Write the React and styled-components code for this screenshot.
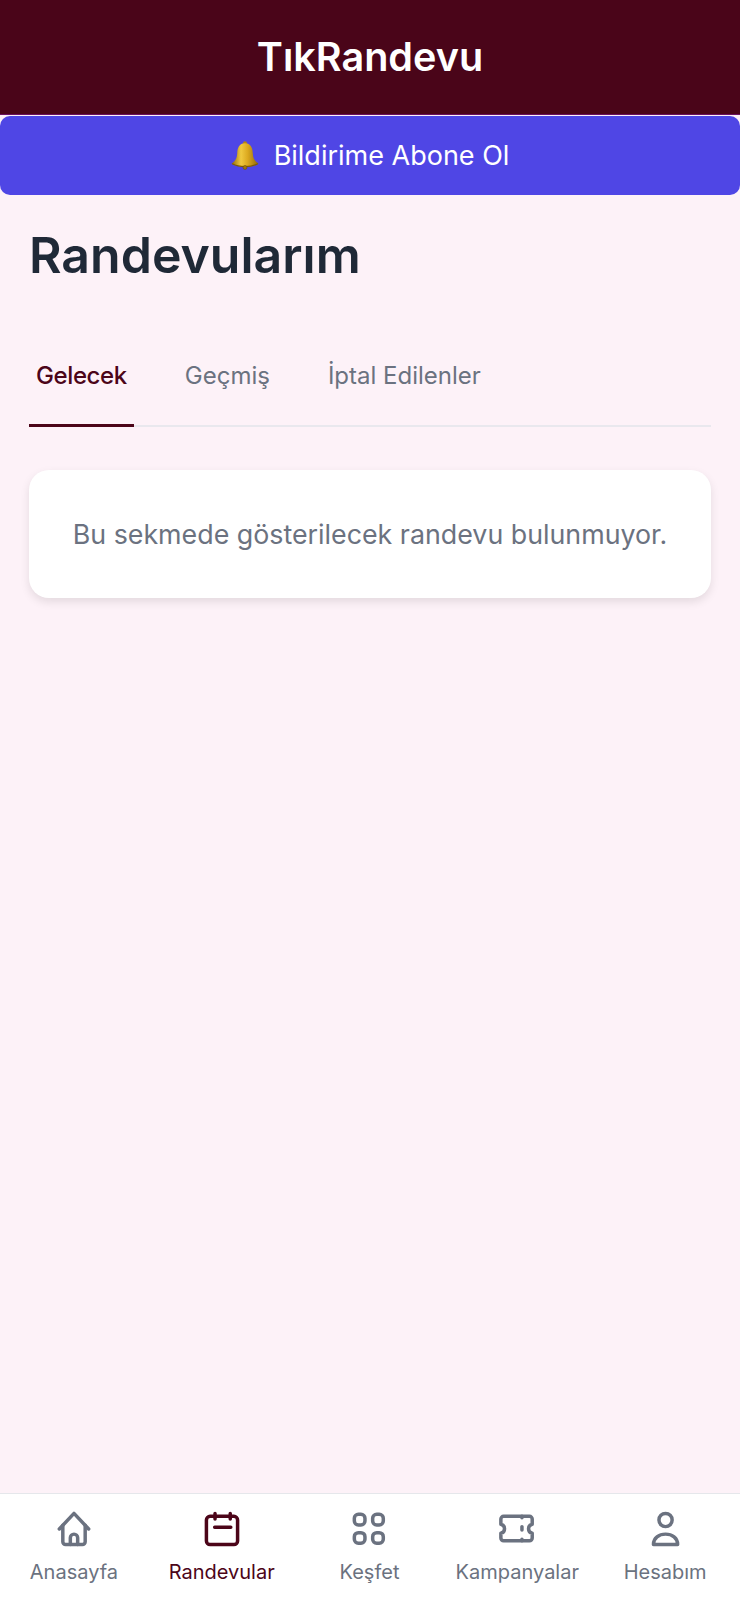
import styled, { createGlobalStyle } from "styled-components";

const GlobalStyle = createGlobalStyle`
  body {
    margin: 0;
    font-family: "Inter", "Noto Sans", sans-serif;
    background: #fdf2f8;
  }
`;

const tabs = ["Gelecek", "Geçmiş", "İptal Edilenler"];

const navItems = [
  {
    label: "Anasayfa",
    icon: (
      <>
        <path d="M4 12 12 3.500 20 12" />
        <path d="M5.900 10v9a1.500 1.500 0 0 0 1.500 1.500h9.200a1.500 1.500 0 0 0 1.500-1.500v-9" />
        <path d="M10 20.500V16.800a2 2 0 0 1 4 0v3.700" />
      </>
    ),
  },
  {
    label: "Randevular",
    active: true,
    icon: (
      <>
        <rect x="3.500" y="5.100" width="17" height="15.400" rx="2" />
        <path d="M8.200 3.500v3M16.500 3.500v3M8 11h8.800" />
      </>
    ),
  },
  {
    label: "Keşfet",
    icon: (
      <>
        <rect x="4" y="4" width="5.800" height="5.800" rx="2.200" />
        <rect x="14" y="4" width="5.800" height="5.800" rx="2.200" />
        <rect x="4" y="14" width="5.800" height="5.800" rx="2.200" />
        <rect x="14" y="14" width="5.800" height="5.800" rx="2.200" />
      </>
    ),
  },
  {
    label: "Kampanyalar",
    icon: (
      <>
        <path d="M4.700 5.100h14.100a1.500 1.500 0 0 1 1.500 1.500v2.800a2.500 2.500 0 0 0 0 4.900v2.600a1.500 1.500 0 0 1-1.500 1.500H4.700a1.500 1.500 0 0 1-1.500-1.500v-2.600a2.500 2.500 0 0 0 0-4.900V6.600a1.500 1.500 0 0 1 1.500-1.500Z" />
        <path d="M14.700 5.100v.8M14.700 10.700v1.800M14.700 17.600v.8" />
      </>
    ),
  },
  {
    label: "Hesabım",
    icon: (
      <>
        <circle cx="12.300" cy="7.100" r="3.600" />
        <path d="M5.700 20.400c0-3.500 3-5.600 6.600-5.600s6.600 2.100 6.600 5.600Z" />
      </>
    ),
  },
];

export default function App() {
  return (
    <Page>
      <GlobalStyle />
      <Header>TıkRandevu</Header>
      <SubscribeButton type="button">
        <BellIcon />
        Bildirime Abone Ol
      </SubscribeButton>
      <Main>
        <Title>Randevularım</Title>
        <TabBar>
          {tabs.map((tab, index) => (
            <Tab key={tab} $active={index === 0}>
              {tab}
            </Tab>
          ))}
        </TabBar>
        <EmptyCard>Bu sekmede gösterilecek randevu bulunmuyor.</EmptyCard>
      </Main>
      <BottomNav>
        {navItems.map(({ label, icon, active }) => (
          <NavItem key={label} $active={active}>
            <NavIcon viewBox="0 0 24 24">{icon}</NavIcon>
            {label}
          </NavItem>
        ))}
      </BottomNav>
    </Page>
  );
}

function BellIcon() {
  return (
    <StyledBell viewBox="2 1 24 25">
      <defs>
        <linearGradient id="bellGold" x1="0" x2="1" y1="0" y2="0">
          <stop offset="0" stopColor="#8f6708" />
          <stop offset="0.35" stopColor="#f0c93f" />
          <stop offset="0.6" stopColor="#dca91f" />
          <stop offset="1" stopColor="#8f6708" />
        </linearGradient>
      </defs>
      <circle cx="14" cy="3" r="1.800" fill="#b5860f" />
      <path
        d="M14 3c-5 0-6.500 4-6.700 8.500-.2 4.500-1.800 7-5 9 3 2 7.700 3 11.700 3s8.700-1 11.700-3c-3.200-2-4.800-4.500-5-9C20.500 7 19 3 14 3Z"
        fill="url(#bellGold)"
      />
      <path d="M3 20.700c3 1.600 7.500 2.400 11 2.400s8-.8 11-2.400" fill="none" stroke="#7d5a08" strokeWidth="1" />
      <circle cx="14" cy="23.800" r="1.700" fill="#a1740c" stroke="#6b4c06" strokeWidth="0.500" />
    </StyledBell>
  );
}

const Page = styled.div`
  display: flex;
  flex-direction: column;
  height: 1600px;
  overflow: hidden;
  background: #fdf2f8;
`;

const Header = styled.header`
  display: flex;
  align-items: center;
  justify-content: center;
  height: 114px;
  flex-shrink: 0;
  border-bottom: 1px solid #6b1060;
  background: #4a0519;
  color: #ffffff;
  font-size: 39.600px;
  font-weight: 600;
`;

const SubscribeButton = styled.button`
  display: flex;
  align-items: center;
  justify-content: center;
  gap: 15px;
  width: 100%;
  height: 79px;
  flex-shrink: 0;
  margin-top: 1px;
  border: none;
  border-radius: 10px;
  background: #4f46e5;
  color: #ffffff;
  font-family: inherit;
  font-size: 27px;
  font-weight: 400;
`;

const StyledBell = styled.svg`
  width: 28px;
  height: 29px;
`;

const Main = styled.main`
  display: flex;
  flex: 1;
  flex-direction: column;
  padding: 30px 29px 0;
`;

const Title = styled.h1`
  margin: 0;
  color: #1f2937;
  font-size: 50px;
  font-weight: 600;
  line-height: 60px;
`;

const TabBar = styled.div`
  display: flex;
  gap: 44px;
  margin-top: 44px;
  border-bottom: 2px solid #e9e8ee;
`;

const Tab = styled.div`
  margin-bottom: -2px;
  padding: 32px 7px 33px;
  border-bottom: 3px solid ${({ $active }) => ($active ? "#4c0519" : "transparent")};
  color: ${({ $active }) => ($active ? "#4c0519" : "#6b7280")};
  font-size: 24px;
  font-weight: ${({ $active }) => ($active ? 500 : 400)};
  letter-spacing: ${({ $active }) => ($active ? "-0.4px" : "0")};
  line-height: 30px;
`;

const EmptyCard = styled.div`
  margin-top: 43px;
  padding: 44px 16px;
  border-radius: 20px;
  background: #ffffff;
  box-shadow: 0 4px 10px rgba(0, 0, 0, 0.1);
  color: #6b7280;
  font-size: 26.800px;
  line-height: 40px;
  text-align: center;
`;

const BottomNav = styled.nav`
  display: grid;
  grid-template-columns: repeat(5, 1fr);
  flex-shrink: 0;
  box-sizing: border-box;
  height: 107px;
  padding: 13px 1px 0 0;
  border-top: 1px solid #e5e7eb;
  background: #ffffff;
`;

const NavItem = styled.div`
  display: flex;
  flex-direction: column;
  align-items: center;
  gap: 8px;
  color: ${({ $active }) => ($active ? "#4c0519" : "#6b7280")};
  font-size: 20px;
  line-height: 26px;
  white-space: nowrap;
`;

const NavIcon = styled.svg`
  width: 44px;
  height: 44px;
  fill: none;
  stroke: currentColor;
  stroke-width: 1.900;
  stroke-linecap: round;
  stroke-linejoin: round;
`;
